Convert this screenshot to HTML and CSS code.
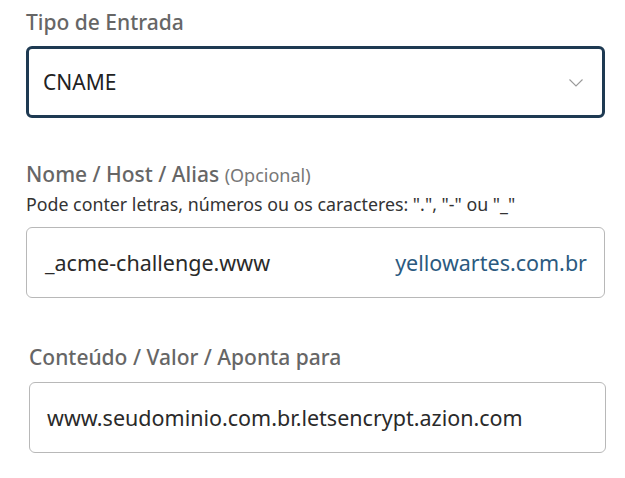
FILE: index.html
```html
<!DOCTYPE html>
<html lang="pt-BR">
<head>
<meta charset="utf-8">
<link rel="stylesheet" href="styles.css">
</head>
<body>
<form class="form">
  <div class="field field-type">
    <label class="label">Tipo de Entrada</label>
    <div class="select">
      <span class="select-value">CNAME</span>
      <svg class="chevron" width="14" height="8" viewBox="0 0 14 8"><path d="M0.5 0.5 L7 7 L13.5 0.5" fill="none" stroke="#9a9a9a" stroke-width="1.1"/></svg>
    </div>
  </div>
  <div class="field field-name">
    <label class="label">Nome / Host / Alias <span class="optional">(Opcional)</span></label>
    <p class="help">Pode conter letras, números ou os caracteres: ".", "-" ou "_"</p>
    <div class="input">
      <span class="input-value">_acme-challenge.www</span>
      <span class="suffix">yellowartes.com.br</span>
    </div>
  </div>
  <div class="field field-content">
    <label class="label">Conteúdo / Valor / Aponta para</label>
    <div class="input">
      <span class="input-value">www.seudominio.com.br.letsencrypt.azion.com</span>
    </div>
  </div>
</form>
</body>
</html>
```
FILE: styles.css
```css
* { box-sizing: border-box; }
html, body { margin: 0; padding: 0; background: #fff; }
body { font-family: "Noto Sans", "Open Sans", sans-serif; }
.form { width: 625px; padding: 9px 0 0 26px; }
.field { width: 579px; }
.label { display: block; font-size: 21px; color: #666; line-height: 26px; font-weight: 500; white-space: nowrap; }
.optional { font-size: 18px; font-weight: 400; color: #777; }
.select {
  margin-top: 11px;
  height: 72px;
  border: 3px solid #1e3a52;
  border-radius: 6px;
  display: flex;
  align-items: center;
  justify-content: space-between;
  padding: 0 19px 0 14px;
}
.select-value { font-size: 21px; color: #222; }
.chevron { display: block; margin-top: 1px; }
.field-name { margin-top: 43px; }
.help { margin: 6px 0 0; font-size: 17.8px; color: #333; line-height: 20px; white-space: nowrap; }
.input {
  margin-top: 13px;
  height: 71px;
  border: 1px solid #b8b8b8;
  border-radius: 6px;
  display: flex;
  align-items: center;
  justify-content: space-between;
  padding: 0 17px 0 18px;
  font-size: 21.5px;
  white-space: nowrap;
}
.input-value { color: #2a2a2a; }
.suffix { color: #2b5a80; }
.field-content { margin-top: 46px; margin-left: 3px; width: 577px; }
.field-content .input { margin-top: 12px; padding-left: 17px; }
```
